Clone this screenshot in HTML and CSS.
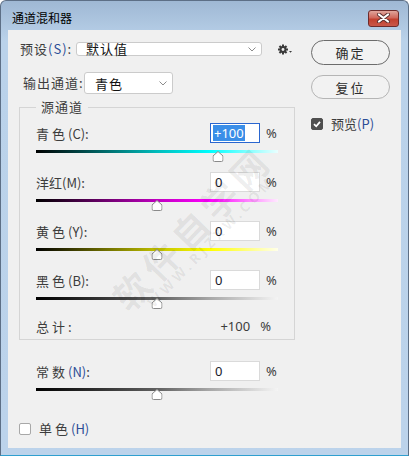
FILE: index.html
```html
<!DOCTYPE html>
<html lang="zh-CN">
<head>
  <meta charset="UTF-8">
  <title>通道混和器</title>
  <link rel="stylesheet" href="styles.css">
</head>
<body>

  <div class="window">
    <!-- Title Bar -->
    <div class="titlebar">
      <span class="title">通道混和器</span>
      <button class="close">
        <svg width="15" height="10" viewBox="0 0 15 10">
          <path d="M3 1.5 L12 8.5 M12 1.5 L3 8.5" stroke="#5a3030" stroke-width="4" stroke-linecap="round"/>
          <path d="M3 1.5 L12 8.5 M12 1.5 L3 8.5" stroke="#ffffff" stroke-width="2.2" stroke-linecap="round"/>
        </svg>
      </button>
    </div>

    <div class="client">
      <div class="main">
        <div class="row preset">
          <label>预设<span class="key">(S)</span>:</label>
          <div class="select select-wide">
            <span>默认值</span>
            <svg class="chev" width="8" height="5" viewBox="0 0 8 5"><path d="M0.5 0.5 L4 4 L7.5 0.5" fill="none" stroke="#8c8c8c"/></svg>
          </div>
          <svg class="gear" width="15" height="11" viewBox="0 0 15 11">
            <g fill="#3a3a3a">
              <circle cx="5" cy="5.5" r="3.4"/>
              <rect x="4" y="0.5" width="2" height="10"/>
              <rect x="0" y="4.5" width="10" height="2"/>
              <rect x="4" y="0.5" width="2" height="10" transform="rotate(45 5 5.5)"/>
              <rect x="4" y="0.5" width="2" height="10" transform="rotate(-45 5 5.5)"/>
              <path d="M11 7 L14 7 L12.5 8.8 Z"/>
            </g>
            <circle cx="5" cy="5.5" r="1.4" fill="#f0f0f0"/>
          </svg>
        </div>

        <div class="row output">
          <label>输出通道:</label>
          <div class="select select-short">
            <span>青色</span>
            <svg class="chev" width="8" height="5" viewBox="0 0 8 5"><path d="M0.5 0.5 L4 4 L7.5 0.5" fill="none" stroke="#8c8c8c"/></svg>
          </div>
        </div>

        <fieldset class="source">
          <legend>源通道</legend>

          <div class="channel">
            <div class="line">
              <span class="label"><span class="sp">青色</span>(C):</span>
              <span class="num focused"><span class="selected">+100</span></span>
              <span class="pct">%</span>
            </div>
            <div class="track cyan">
              <svg class="thumb" style="left: 75%" width="11" height="11" viewBox="0 0 11 11"><path d="M5.5 0.5 L10.5 5 L10.5 9 Q10.5 10.5 9 10.5 L2 10.5 Q0.5 10.5 0.5 9 L0.5 5 Z" fill="#fff" stroke="#8a8a8a"/></svg>
            </div>
          </div>

          <div class="channel">
            <div class="line">
              <span class="label">洋红(M):</span>
              <span class="num">0</span>
              <span class="pct">%</span>
            </div>
            <div class="track magenta">
              <svg class="thumb" style="left: 50%" width="11" height="11" viewBox="0 0 11 11"><path d="M5.5 0.5 L10.5 5 L10.5 9 Q10.5 10.5 9 10.5 L2 10.5 Q0.5 10.5 0.5 9 L0.5 5 Z" fill="#fff" stroke="#8a8a8a"/></svg>
            </div>
          </div>

          <div class="channel">
            <div class="line">
              <span class="label"><span class="sp">黄色</span>(Y):</span>
              <span class="num">0</span>
              <span class="pct">%</span>
            </div>
            <div class="track yellow">
              <svg class="thumb" style="left: 50%" width="11" height="11" viewBox="0 0 11 11"><path d="M5.5 0.5 L10.5 5 L10.5 9 Q10.5 10.5 9 10.5 L2 10.5 Q0.5 10.5 0.5 9 L0.5 5 Z" fill="#fff" stroke="#8a8a8a"/></svg>
            </div>
          </div>

          <div class="channel">
            <div class="line">
              <span class="label"><span class="sp">黑色</span>(B):</span>
              <span class="num">0</span>
              <span class="pct">%</span>
            </div>
            <div class="track gray">
              <svg class="thumb" style="left: 50%" width="11" height="11" viewBox="0 0 11 11"><path d="M5.5 0.5 L10.5 5 L10.5 9 Q10.5 10.5 9 10.5 L2 10.5 Q0.5 10.5 0.5 9 L0.5 5 Z" fill="#fff" stroke="#8a8a8a"/></svg>
            </div>
          </div>

          <div class="total">
            <span class="label"><span class="sp">总计</span>:</span>
            <span class="total-val">+100</span>
            <span class="total-pct">%</span>
          </div>
        </fieldset>

        <div class="channel constant">
          <div class="line">
            <span class="label"><span class="sp">常数</span><span class="key">(N)</span>:</span>
            <span class="num">0</span>
            <span class="pct">%</span>
          </div>
          <div class="track gray">
            <svg class="thumb" style="left: 50%" width="11" height="11" viewBox="0 0 11 11"><path d="M5.5 0.5 L10.5 5 L10.5 9 Q10.5 10.5 9 10.5 L2 10.5 Q0.5 10.5 0.5 9 L0.5 5 Z" fill="#fff" stroke="#8a8a8a"/></svg>
          </div>
        </div>

        <label class="check mono">
          <span class="box"></span>
          <span><span class="sp">单色</span><span class="key">(H)</span></span>
        </label>
      </div>

      <!-- Buttons -->
      <div class="side">
        <button class="btn btn-default">确定</button>
        <button class="btn">复位</button>
        <label class="check preview">
          <span class="box on">
            <svg width="10" height="10" viewBox="0 0 10 10"><path d="M2 5.2 L4.2 7.3 L8 2.8" fill="none" stroke="#fff" stroke-width="1.8"/></svg>
          </span>
          <span>预览<span class="key">(P)</span></span>
        </label>
      </div>
    </div>

    <!-- watermark on the screenshot -->
    <div class="wm wm-big">软件自学网</div>
    <div class="wm wm-small">WWW.RJZXW.COM</div>
  </div>

</body>
</html>
```

FILE: styles.css
```css
* {
  box-sizing: border-box;
}

body {
  margin: 0;
  font-family: "Noto Sans CJK SC", "Noto Sans", sans-serif;
  font-size: 13px;
  color: #3c3c3c;
}

/* Window frame */
.window {
  position: relative;
  width: 409px;
  height: 456px;
  border: 1px solid #5d6f86;
  border-bottom-color: #2f9fcf;
  border-radius: 6px 6px 0 0;
  background: linear-gradient(#9fb8d4, #bad2ea 40px, #bcd3eb);
  padding: 0 7px 7px;
  display: flex;
  flex-direction: column;
  overflow: hidden;
}

.titlebar {
  height: 29px;
  padding: 5px 0 0 4px;
  display: flex;
  align-items: center;
  justify-content: space-between;
}

.title {
  font-size: 12px;
  color: #000;
  line-height: 14px;
}

.close {
  width: 31px;
  height: 17px;
  margin-right: 2px;
  padding: 0;
  border: 1px solid #6e2b2b;
  border-radius: 3px;
  background: linear-gradient(#e0a59c, #d0685c 45%, #c2402f 55%, #c9584a);
  display: flex;
  align-items: center;
  justify-content: center;
}

.client {
  flex: 1;
  background: #f0f0f0;
  display: flex;
  padding-top: 12px;
}

.main {
  width: 288px;
  padding-left: 11px;
}

.key {
  color: #2b4d96;
}

.sp {
  letter-spacing: 3px;
}

.row {
  display: flex;
  align-items: center;
}

.row label {
  letter-spacing: 1px;
  line-height: 14px;
}

/* Preset row */
.preset {
  height: 14px;
}

.preset label {
  flex: 0 0 57px;
  padding-left: 1px;
}

.select {
  background: #fff;
  border: 1px solid #cbcbcb;
  border-radius: 3px;
  display: flex;
  align-items: center;
  justify-content: space-between;
  color: #111;
  letter-spacing: 1px;
}

.select-wide {
  width: 186px;
  height: 14px;
  line-height: 12px;
  padding: 0 5px 0 9px;
}

.gear {
  margin-left: 16px;
}

/* Output row */
.output {
  height: 22px;
  margin-top: 16px;
}

.output label {
  flex: 0 0 65px;
  padding-left: 4px;
}

.select-short {
  width: 89px;
  height: 22px;
  padding: 0 5px 0 10px;
}

/* Source channels */
.source {
  width: 276px;
  margin: 5px 0 0;
  padding: 8px 16px 6px;
  border: 1px solid #d5d5d5;
}

.source legend {
  padding: 0 5px;
  line-height: 16px;
  letter-spacing: 1px;
}

.channel {
  height: 49px;
}

.line {
  display: flex;
  align-items: center;
  height: 20px;
}

.label {
  flex: 0 0 174px;
}

.num {
  width: 50px;
  height: 20px;
  background: #fff;
  border: 1px solid #dadada;
  padding-left: 4px;
  line-height: 18px;
  color: #1b1b2b;
  font-family: "Noto Sans", sans-serif;
  font-size: 13px;
}

.num.focused {
  border-color: #2a66cf;
  padding-left: 2px;
}

.selected {
  background: #3a8ee8;
  color: #fff;
  padding: 0 1px;
  display: inline-block;
  line-height: 16px;
}

.pct {
  margin-left: 6px;
  font-family: "Noto Sans", sans-serif;
}

.track {
  position: relative;
  height: 3px;
  margin-top: 7px;
}

.cyan {
  background: linear-gradient(to right, #000, #00bcbc 50%, #00ffff 72%, #eaffff);
}

.magenta {
  background: linear-gradient(to right, #000, #c000c0 50%, #ff00ff 72%, #ffeaff);
}

.yellow {
  background: linear-gradient(to right, #000, #c0c000 50%, #ffff00 72%, #ffffea);
}

.gray {
  background: linear-gradient(to right, #000, #606060 50%, #a8a8a8 72%, #f4f4f4);
}

.thumb {
  position: absolute;
  top: 1px;
  transform: translateX(-50%);
}

.total {
  display: flex;
  align-items: center;
  height: 14px;
}

.total-val {
  margin-left: auto;
  font-family: "Noto Sans", sans-serif;
}

.total-pct {
  margin-left: 10px;
  margin-right: 7px;
  font-family: "Noto Sans", sans-serif;
}

.constant {
  width: 259px;
  margin-top: 21px;
  padding-left: 17px;
}

.constant .label {
  flex-basis: 174px;
}

/* Checkboxes */
.check {
  display: flex;
  align-items: center;
  gap: 8px;
  line-height: 14px;
}

.box {
  width: 12px;
  height: 12px;
  border: 1px solid #a8a8a8;
  border-radius: 2px;
  background: #fff;
  display: flex;
  align-items: center;
  justify-content: center;
}

.box.on {
  background: #4f4f4f;
  border-color: #4f4f4f;
}

.mono {
  margin-top: 12px;
}

/* Right column */
.side {
  width: 79px;
  margin-left: 15px;
  margin-top: -2px;
  display: flex;
  flex-direction: column;
}

.btn {
  height: 24px;
  border: 1px solid #b5b5b5;
  border-radius: 13px;
  background: #f2f2f2;
  font-family: inherit;
  font-size: 13px;
  letter-spacing: 2px;
  color: #2c2c2c;
  padding: 0;
}

.btn-default {
  height: 25px;
  border-color: #6c6c6c;
  margin-bottom: 10px;
}

.preview {
  margin-top: 18px;
}

/* Watermark */
.wm {
  position: absolute;
  color: rgba(0, 0, 0, 0.07);
  pointer-events: none;
  white-space: nowrap;
  transform: translate(-50%, -50%) rotate(-46deg);
}

.wm-big {
  left: 190px;
  top: 226px;
  font-size: 36px;
  font-weight: bold;
  letter-spacing: 6px;
}

.wm-small {
  left: 210px;
  top: 240px;
  font-family: "Noto Sans", sans-serif;
  font-size: 14px;
  font-weight: bold;
  letter-spacing: 4px;
}
```
